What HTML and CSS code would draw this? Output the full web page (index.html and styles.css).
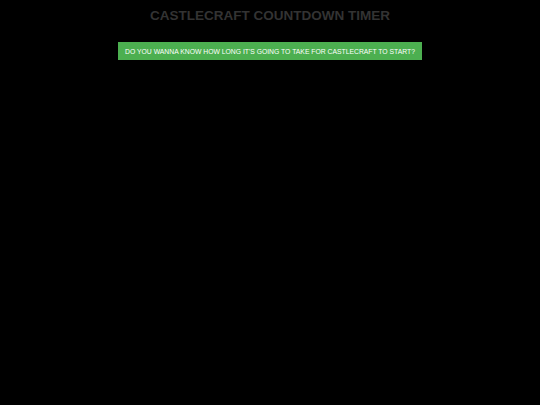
FILE: index.html
```html
<!DOCTYPE html>
<html>
<head>
<link rel="stylesheet" href="styles.css">
</head>
<body>
<div class="page">
	<h1 class="title">CASTLECRAFT COUNTDOWN TIMER</h1>
	<button class="ask" type="button">DO YOU WANNA KNOW HOW LONG IT'S GOING TO TAKE FOR CASTLECRAFT TO START?</button>
</div>
</body>
</html>
```
FILE: styles.css
```css
body{
	margin: 0;
	background-color: #000;
	font-family: "Liberation Sans", Arial, sans-serif;
}
.page{
	display: flex;
	flex-direction: column;
	align-items: center;
	padding-top: 9px;
}
.title{
	margin: 0;
	font-size: 13.5px;
	line-height: 14px;
	color: #333;
	font-weight: bold;
}
.ask{
	margin-top: 19px;
	height: 18px;
	padding: 0 7.5px;
	background-color: #4caf50;
	color: #fff;
	border: none;
	font-family: "Liberation Sans", Arial, sans-serif;
	font-size: 6.8px;
}
```
